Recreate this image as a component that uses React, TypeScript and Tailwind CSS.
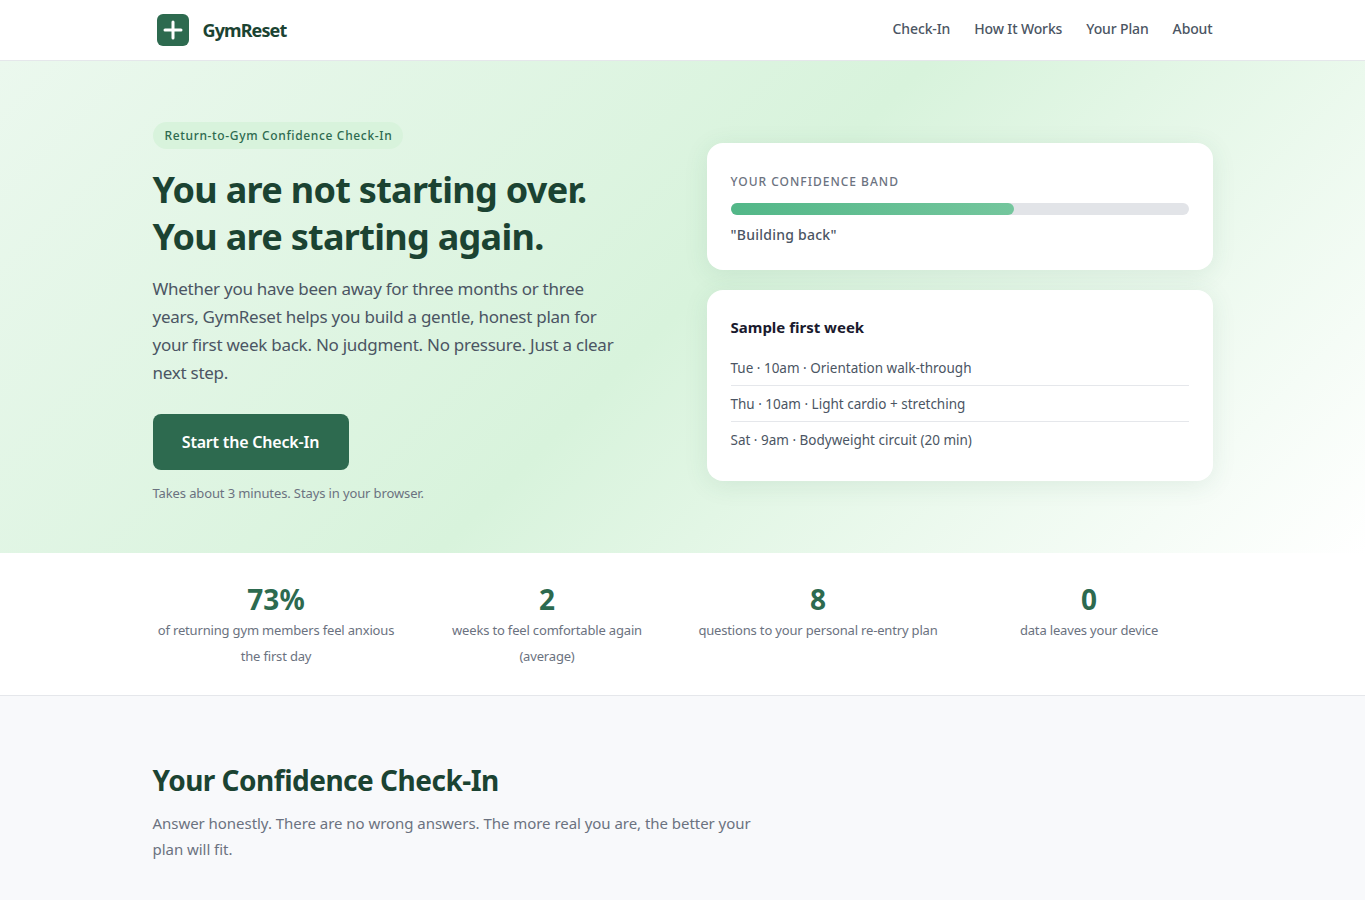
const navLinks = ["Check-In", "How It Works", "Your Plan", "About"];

const stats = [
  { value: "73%", label: "of returning gym members feel anxious the first day" },
  { value: "2", label: "weeks to feel comfortable again (average)" },
  { value: "8", label: "questions to your personal re-entry plan" },
  { value: "0", label: "data leaves your device" },
];

const week = [
  "Tue · 10am · Orientation walk-through",
  "Thu · 10am · Light cardio + stretching",
  "Sat · 9am · Bodyweight circuit (20 min)",
];

export default function App() {
  return (
    <div className="min-h-screen bg-[#f8f9fb] font-['Noto_Sans',sans-serif] text-[#1f2937]">
      <header className="h-[61px] border-b border-[#e5e7eb] bg-white">
        <div className="mx-auto flex h-[60px] w-[1060px] items-center justify-between">
          <div className="ml-1 flex items-center gap-[14px]">
            <svg width="32" height="32" viewBox="0 0 32 32" aria-hidden="true">
              <rect width="32" height="32" rx="6" fill="#2d6a4f" />
              <path d="M16 8v16M8 16h16" stroke="#fff" strokeWidth="3" strokeLinecap="round" />
            </svg>
            <span className="text-lg font-bold tracking-[-0.9px] text-[#1b4332]">GymReset</span>
          </div>
          <nav className="flex gap-6 pb-[2px]">
            {navLinks.map((l) => (
              <a key={l} href="#" className="text-sm font-medium tracking-[-0.13px] text-[#4b5563]">
                {l}
              </a>
            ))}
          </nav>
        </div>
      </header>

      <section className="h-[492px] bg-[linear-gradient(135deg,#ebf8ee_0%,#d8f3dc_50%,#ffffff_100%)]">
        <div className="mx-auto grid w-[1060px] grid-cols-2 items-center gap-[48px] pt-[61px]">
          <div>
            <span className="block w-[250px] rounded-full bg-[#d8f3dc] px-3 py-1 text-xs leading-[19px] font-medium tracking-[0.65px] whitespace-nowrap text-[#2d6a4f]">
              Return-to-Gym Confidence Check-In
            </span>
            <h1 className="mt-[17px] text-[36px] leading-[47px] font-bold tracking-[-0.7px] text-[#1b4332]">
              You are not starting over.
              <br />
              You are starting again.
            </h1>
            <p className="mt-[15px] max-w-[475px] text-[17px] leading-7 tracking-[-0.26px] text-[#4b5563]">
              Whether you have been away for three months or three years, GymReset helps you build a gentle, honest plan for your first week back. No judgment. No pressure. Just a clear next step.
            </p>
            <button className="mt-[27px] block h-14 w-[196px] rounded-lg bg-[#2d6a4f] text-base font-semibold tracking-[-0.2px] text-white">
              Start the Check-In
            </button>
            <p className="mt-[13px] text-[13px] leading-5 tracking-[-0.12px] text-[#6b7280]">
              Takes about 3 minutes. Stays in your browser.
            </p>
          </div>

          <div className="flex flex-col gap-5 pb-px">
            <div className="rounded-2xl bg-white px-6 pt-[30px] pb-6 shadow-[0_4px_24px_rgba(45,106,79,0.1)]">
              <div className="text-xs leading-[18px] font-medium tracking-[1px] text-[#6b7280]">YOUR CONFIDENCE BAND</div>
              <div className="mt-3 h-3 rounded-full bg-[#e2e4e8]">
                <div className="h-3 w-[62%] rounded-full bg-[linear-gradient(90deg,#52b788,#74c69d)]" />
              </div>
              <div className="mt-[9px] text-sm leading-[22px] font-medium tracking-[0.25px] text-[#4b5563]">"Building back"</div>
            </div>

            <div className="rounded-2xl bg-white px-6 pt-[26px] pb-6 shadow-[0_4px_24px_rgba(45,106,79,0.1)]">
              <div className="text-[15px] leading-[22px] font-bold text-[#1a1a2e]">Sample first week</div>
              <ul className="mt-3">
                {week.map((w) => (
                  <li key={w} className="border-b border-[#e5e7eb] pt-[9px] pb-[7px] text-[13.5px] leading-[19px] text-[#4b5563] last:border-b-0">
                    {w}
                  </li>
                ))}
              </ul>
            </div>
          </div>
        </div>
      </section>

      <section className="h-[143px] border-b border-[#e5e7eb] bg-white">
        <div className="mx-auto grid w-[1060px] grid-cols-4 gap-[24px] pt-[26px]">
          {stats.map((s) => (
            <div key={s.value} className="text-center">
              <div className="text-[28px] leading-[40px] font-bold text-[#2d6a4f]">{s.value}</div>
              <div className="-mt-[2px] text-[13px] leading-[26px] tracking-[-0.17px] text-[#6b7280]">{s.label}</div>
            </div>
          ))}
        </div>
      </section>

      <section className="mx-auto h-[204px] w-[1060px] pt-[63px]">
        <h2 className="text-[28px] leading-[42px] font-bold tracking-[-0.5px] text-[#1b4332]">Your Confidence Check-In</h2>
        <p className="mt-[9px] w-[620px] text-[15px] leading-[26px] tracking-[-0.04px] text-[#6b7280]">
          Answer honestly. There are no wrong answers. The more real you are, the better your plan will fit.
        </p>
      </section>
    </div>
  );
}
